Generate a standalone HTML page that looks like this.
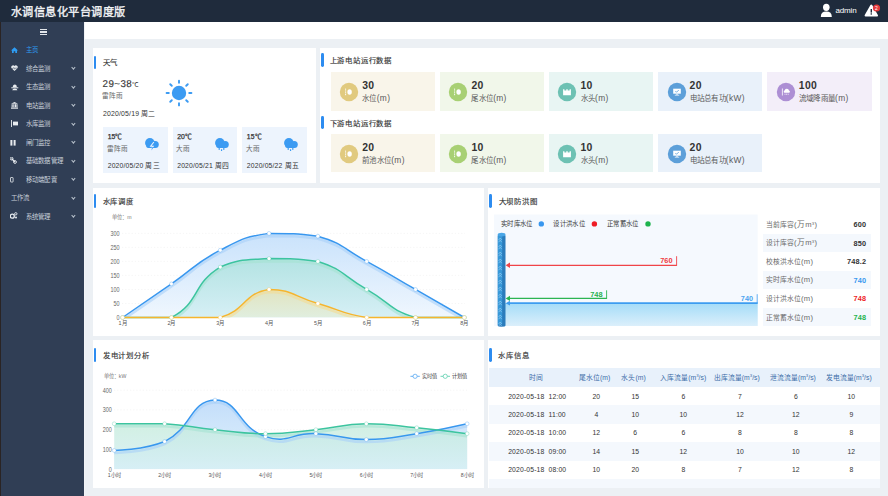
<!DOCTYPE html><html lang="zh-CN"><head><meta charset="utf-8"><style>
*{margin:0;padding:0;box-sizing:border-box}
html,body{width:888px;height:496px;overflow:hidden;background:#ecf0f4;font-family:"Liberation Sans",sans-serif;color:#333}
.a{position:absolute;white-space:nowrap}
.card{position:absolute;background:#fff}
.bar{position:absolute;width:2.8px;background:#2d8cf0;border-radius:1.4px}
.ttl{position:absolute;font-size:7.4px;color:#333;line-height:1;white-space:nowrap;letter-spacing:0.8px;-webkit-text-stroke:0.15px #333}
.mi{position:absolute;font-size:6.4px;letter-spacing:0.3px;color:#c3cbd6;line-height:1;white-space:nowrap}
.chev{position:absolute;width:2.8px;height:2.8px;border-right:0.8px solid #b8c1cc;border-bottom:0.8px solid #b8c1cc;transform:rotate(45deg)}
svg text{font-family:"Liberation Sans",sans-serif}
</style></head><body>
<div class="a" style="left:0;top:0;width:888px;height:21.8px;background:#1f2b3c"></div>
<div class="a" style="left:10.6px;top:5.8px;font-size:11.2px;line-height:13px;color:#f4f5f7;letter-spacing:0.5px;-webkit-text-stroke:0.35px #f4f5f7">水调信息化平台调度版</div>
<svg class="a" style="left:819.5px;top:3px" width="13" height="15" viewBox="0 0 13 15"><ellipse cx="6.3" cy="4.3" rx="3.3" ry="3.6" fill="#fff"/><path d="M0.8,14 Q0.8,8.6 6.3,8.6 Q11.8,8.6 11.8,14 Z" fill="#fff"/></svg>
<div class="a" style="left:835.5px;top:5.6px;font-size:8px;line-height:10px;color:#fff;letter-spacing:-0.15px">admin</div>
<svg class="a" style="left:864px;top:2px" width="22" height="17" viewBox="0 0 22 17"><path d="M7.3,3.5 L13,13.6 L1.6,13.6 Z" fill="#fff" stroke="#fff" stroke-width="2" stroke-linejoin="round"/><rect x="6.6" y="7" width="1.4" height="3.6" fill="#1e2a3b"/><rect x="6.6" y="11.3" width="1.4" height="1.3" fill="#1e2a3b"/><circle cx="12.5" cy="6" r="3.6" fill="#e4393c"/><text x="12.5" y="7.9" font-size="5" fill="#fff" text-anchor="middle">2</text></svg>
<div class="a" style="left:0;top:21.8px;width:84px;height:475px;background:#303e55"></div>
<div class="a" style="left:0;top:21.8px;width:1.2px;height:475px;background:#2a2424"></div>
<div class="a" style="left:83.8px;top:21.8px;width:1.2px;height:475px;background:#f1f3f6"></div>
<div class="a" style="left:39.6px;top:29.0px;width:7.2px;height:1.3px;background:#e2e6eb"></div>
<div class="a" style="left:39.6px;top:31.4px;width:7.2px;height:1.3px;background:#e2e6eb"></div>
<div class="a" style="left:39.6px;top:33.9px;width:7.2px;height:1.3px;background:#e2e6eb"></div>
<div class="mi" style="left:25.5px;top:47.1px;color:#2e9cf3">主页</div>
<svg class="a" style="left:11.0px;top:47.3px" width="8" height="8" viewBox="0 0 8 8"><path d="M3.5,0.3 L7,3.4 L6,3.4 L6,6 L4.3,6 L4.3,4.3 L2.7,4.3 L2.7,6 L1,6 L1,3.4 L0,3.4 Z" fill="#2e9cf3"/></svg>
<div class="mi" style="left:25.5px;top:65.6px;color:#c9d0da">综合监测</div>
<div class="chev" style="left:72.4px;top:66.2px"></div>
<svg class="a" style="left:10.6px;top:65.4px" width="8" height="8" viewBox="0 0 8 8"><path d="M3.5,6 L0.6,3.2 A1.7,1.7 0 0 1 3.5,1 A1.7,1.7 0 0 1 6.4,3.2 Z" fill="#e8ecf0"/><path d="M0.6,3.4 L2.2,3.4 L2.8,2.4 L3.6,4.2 L4.3,3.1 L6.4,3.1" stroke="#303e55" stroke-width="0.5" fill="none"/></svg>
<div class="mi" style="left:25.5px;top:84.1px;color:#c9d0da">生态监测</div>
<div class="chev" style="left:72.4px;top:84.7px"></div>
<svg class="a" style="left:10.5px;top:84.0px" width="8" height="8" viewBox="0 0 8 8"><path d="M1.8,3.2 Q1.8,0.4 3.8,0.4 Q5.8,0.4 5.8,3.2 Z" fill="#e8ecf0"/><rect x="0.3" y="3.3" width="7" height="1" fill="#e8ecf0"/><path d="M1.2,6.2 Q1.5,4.6 3.8,4.6 Q6.1,4.6 6.4,6.2 Z" fill="#e8ecf0"/></svg>
<div class="mi" style="left:25.5px;top:102.6px;color:#c9d0da">电站监测</div>
<div class="chev" style="left:72.4px;top:103.2px"></div>
<svg class="a" style="left:10.6px;top:101.8px" width="8" height="8" viewBox="0 0 8 8"><path d="M3.5,0 L7,1.8 L0,1.8 Z" fill="#e8ecf0"/><rect x="0.6" y="2.2" width="1.1" height="3" fill="#e8ecf0"/><rect x="2.3" y="2.2" width="1.1" height="3" fill="#e8ecf0"/><rect x="3.9" y="2.2" width="1.1" height="3" fill="#e8ecf0"/><rect x="5.4" y="2.2" width="1.1" height="3" fill="#e8ecf0"/><rect x="0" y="5.5" width="7" height="1.2" fill="#e8ecf0"/></svg>
<div class="mi" style="left:25.5px;top:121.1px;color:#c9d0da">水库监测</div>
<div class="chev" style="left:72.4px;top:121.7px"></div>
<svg class="a" style="left:10.5px;top:120.0px" width="8" height="8" viewBox="0 0 8 8"><rect x="0" y="0" width="0.9" height="7" fill="#e8ecf0"/><rect x="2" y="1.6" width="5" height="3.8" fill="#e8ecf0"/></svg>
<div class="mi" style="left:25.5px;top:139.6px;color:#c9d0da">闸门监控</div>
<div class="chev" style="left:72.4px;top:140.2px"></div>
<svg class="a" style="left:10.2px;top:139.8px" width="8" height="8" viewBox="0 0 8 8"><rect x="0.4" y="0" width="2" height="5.6" fill="#e8ecf0"/><rect x="3.6" y="0" width="2" height="5.6" fill="#e8ecf0"/></svg>
<div class="mi" style="left:25.5px;top:158.1px;color:#c9d0da">基础数据管理</div>
<div class="chev" style="left:72.4px;top:158.7px"></div>
<svg class="a" style="left:10.4px;top:156.6px" width="8" height="8" viewBox="0 0 8 8"><path d="M1.5,1.5 L5,5" stroke="#e8ecf0" stroke-width="1.2"/><circle cx="1.6" cy="1.6" r="1.4" fill="none" stroke="#e8ecf0" stroke-width="0.9"/><circle cx="5" cy="5" r="1.4" fill="none" stroke="#e8ecf0" stroke-width="0.9"/></svg>
<div class="mi" style="left:25.5px;top:176.6px;color:#c9d0da">移动端配置</div>
<div class="chev" style="left:72.4px;top:177.2px"></div>
<svg class="a" style="left:10.2px;top:176.8px" width="8" height="8" viewBox="0 0 8 8"><rect x="0.5" y="0.5" width="2.6" height="4.5" rx="0.4" fill="none" stroke="#e8ecf0" stroke-width="0.8"/></svg>
<div class="mi" style="left:10.5px;top:195.1px;color:#c9d0da">工作流</div>
<div class="chev" style="left:72.4px;top:195.7px"></div>
<div class="mi" style="left:25.5px;top:213.6px;color:#c9d0da">系统管理</div>
<div class="chev" style="left:72.4px;top:214.2px"></div>
<svg class="a" style="left:10.4px;top:211.6px" width="8" height="8" viewBox="0 0 8 8"><circle cx="2.3" cy="4.2" r="2" fill="none" stroke="#e8ecf0" stroke-width="1.3"/><circle cx="5.8" cy="1.8" r="1.2" fill="none" stroke="#e8ecf0" stroke-width="0.9"/><circle cx="6" cy="5.6" r="1" fill="#e8ecf0"/></svg>
<div class="a" style="left:85px;top:21.8px;width:803px;height:17.2px;background:#fff"></div>
<div class="card" style="left:93.4px;top:48.0px;width:222.3px;height:134.8px"></div>
<div class="card" style="left:319.8px;top:48.0px;width:560.0px;height:134.8px"></div>
<div class="card" style="left:93.4px;top:187.8px;width:391.1px;height:148.0px"></div>
<div class="card" style="left:488.4px;top:187.8px;width:391.4px;height:148.0px"></div>
<div class="card" style="left:93.4px;top:340.4px;width:391.1px;height:147.8px"></div>
<div class="card" style="left:488.4px;top:340.4px;width:391.4px;height:147.8px"></div>
<div class="bar" style="left:93.6px;top:56.0px;height:12.8px"></div>
<div class="ttl" style="left:102.6px;top:59.1px">天气</div>
<div class="bar" style="left:320.8px;top:53.3px;height:13.8px"></div>
<div class="ttl" style="left:329.6px;top:57.4px">上游电站运行数据</div>
<div class="bar" style="left:320.8px;top:115.9px;height:13.0px"></div>
<div class="ttl" style="left:329.6px;top:120.1px">下游电站运行数据</div>
<div class="bar" style="left:93.6px;top:194.0px;height:14.0px"></div>
<div class="ttl" style="left:102.6px;top:198.1px">水库调度</div>
<div class="bar" style="left:489.0px;top:194.0px;height:14.0px"></div>
<div class="ttl" style="left:498.6px;top:197.8px">大坝防洪图</div>
<div class="bar" style="left:93.6px;top:347.7px;height:14.0px"></div>
<div class="ttl" style="left:102.8px;top:352.3px">发电计划分析</div>
<div class="bar" style="left:489.0px;top:347.7px;height:14.0px"></div>
<div class="ttl" style="left:498.4px;top:351.8px">水库信息</div>
<div class="a" style="left:330.8px;top:72.1px;width:104.2px;height:38.6px;background:#f9f5ea"></div>
<svg class="a" style="left:339.0px;top:81.7px" width="20" height="20" viewBox="-10 -10 20 20"><circle r="9.2" fill="#e1ca7f"/><path d="M-3.4,-3.4 L-3.4,3.4" stroke="#fff" stroke-width="0.9" stroke-dasharray="1.2,0.6"/><ellipse cx="0.6" cy="0" rx="2.2" ry="2.8" fill="#fff"/></svg>
<div class="a" style="left:362.2px;top:79.7px;font-size:10.4px;line-height:11px;font-weight:bold;color:#333;letter-spacing:0.3px">30</div>
<div class="a" style="left:362.2px;top:93.9px;font-size:7.5px;line-height:8px;color:#5a5a5a;letter-spacing:0.25px">水位<span style="letter-spacing:0.35px;font-size:112%">(m)</span></div>
<div class="a" style="left:440.0px;top:72.1px;width:104.2px;height:38.6px;background:#f1f7ea"></div>
<svg class="a" style="left:448.2px;top:81.7px" width="20" height="20" viewBox="-10 -10 20 20"><circle r="9.2" fill="#a8d074"/><path d="M-3.4,-3.4 L-3.4,3.4" stroke="#fff" stroke-width="0.9" stroke-dasharray="1.2,0.6"/><ellipse cx="0.6" cy="0" rx="2.2" ry="2.8" fill="#fff"/></svg>
<div class="a" style="left:471.4px;top:79.7px;font-size:10.4px;line-height:11px;font-weight:bold;color:#333;letter-spacing:0.3px">20</div>
<div class="a" style="left:471.4px;top:93.9px;font-size:7.5px;line-height:8px;color:#5a5a5a;letter-spacing:0.25px">尾水位<span style="letter-spacing:0.35px;font-size:112%">(m)</span></div>
<div class="a" style="left:549.1px;top:72.1px;width:104.2px;height:38.6px;background:#e8f5f3"></div>
<svg class="a" style="left:557.3px;top:81.7px" width="20" height="20" viewBox="-10 -10 20 20"><circle r="9.2" fill="#6dc1b3"/><path d="M-3.9,-2.8 L-2.6,-2.8 L-2.6,-1.4 L-0.7,-1.4 L-0.7,-2.8 L0.7,-2.8 L0.7,-1.4 L2.6,-1.4 L2.6,-2.8 L3.9,-2.8 L3.9,3.3 L-3.9,3.3 Z" fill="#fff"/></svg>
<div class="a" style="left:580.5px;top:79.7px;font-size:10.4px;line-height:11px;font-weight:bold;color:#333;letter-spacing:0.3px">10</div>
<div class="a" style="left:580.5px;top:93.9px;font-size:7.5px;line-height:8px;color:#5a5a5a;letter-spacing:0.25px">水头<span style="letter-spacing:0.35px;font-size:112%">(m)</span></div>
<div class="a" style="left:658.2px;top:72.1px;width:104.2px;height:38.6px;background:#e9f1fa"></div>
<svg class="a" style="left:666.5px;top:81.7px" width="20" height="20" viewBox="-10 -10 20 20"><circle r="9.2" fill="#5c9fd9"/><rect x="-3.8" y="-3.3" width="7.6" height="5" fill="#fff"/><path d="M-1.6,-1 L-0.5,0.3 L1.8,-2" stroke="#5c9fd9" stroke-width="0.8" fill="none"/><rect x="-0.6" y="1.7" width="1.2" height="1.2" fill="#fff"/><rect x="-2.2" y="2.8" width="4.4" height="0.7" fill="#fff"/></svg>
<div class="a" style="left:689.6px;top:79.7px;font-size:10.4px;line-height:11px;font-weight:bold;color:#333;letter-spacing:0.3px">20</div>
<div class="a" style="left:689.6px;top:93.9px;font-size:7.5px;line-height:8px;color:#5a5a5a;letter-spacing:0.25px">电站总有功<span style="letter-spacing:0.35px;font-size:112%">(kW)</span></div>
<div class="a" style="left:767.4px;top:72.1px;width:104.2px;height:38.6px;background:#f3eef9"></div>
<svg class="a" style="left:775.6px;top:81.7px" width="20" height="20" viewBox="-10 -10 20 20"><circle r="9.2" fill="#ad8fd4"/><path d="M-3.6,-3.5 L-3.6,3.5" stroke="#fff" stroke-width="0.8"/><path d="M-1.8,0.8 A1.6,1.6 0 0 1 -1.2,-1.8 A2.2,2.2 0 0 1 3,-1.6 A1.3,1.3 0 0 1 3.2,0.8 Z" fill="#fff"/><path d="M-1,1.6 L-1,3 M0.6,1.6 L0.6,3 M2.2,1.6 L2.2,3" stroke="#fff" stroke-width="0.6"/></svg>
<div class="a" style="left:798.8px;top:79.7px;font-size:10.4px;line-height:11px;font-weight:bold;color:#333;letter-spacing:0.3px">100</div>
<div class="a" style="left:798.8px;top:93.9px;font-size:7.5px;line-height:8px;color:#5a5a5a;letter-spacing:0.25px">流域降雨量<span style="letter-spacing:0.35px;font-size:112%">(m)</span></div>
<div class="a" style="left:330.8px;top:133.9px;width:104.2px;height:38.6px;background:#f9f5ea"></div>
<svg class="a" style="left:339.0px;top:143.5px" width="20" height="20" viewBox="-10 -10 20 20"><circle r="9.2" fill="#e1ca7f"/><path d="M-3.4,-3.4 L-3.4,3.4" stroke="#fff" stroke-width="0.9" stroke-dasharray="1.2,0.6"/><ellipse cx="0.6" cy="0" rx="2.2" ry="2.8" fill="#fff"/></svg>
<div class="a" style="left:362.2px;top:141.5px;font-size:10.4px;line-height:11px;font-weight:bold;color:#333;letter-spacing:0.3px">20</div>
<div class="a" style="left:362.2px;top:155.7px;font-size:7.5px;line-height:8px;color:#5a5a5a;letter-spacing:0.25px">前池水位<span style="letter-spacing:0.35px;font-size:112%">(m)</span></div>
<div class="a" style="left:440.0px;top:133.9px;width:104.2px;height:38.6px;background:#f1f7ea"></div>
<svg class="a" style="left:448.2px;top:143.5px" width="20" height="20" viewBox="-10 -10 20 20"><circle r="9.2" fill="#a8d074"/><path d="M-3.4,-3.4 L-3.4,3.4" stroke="#fff" stroke-width="0.9" stroke-dasharray="1.2,0.6"/><ellipse cx="0.6" cy="0" rx="2.2" ry="2.8" fill="#fff"/></svg>
<div class="a" style="left:471.4px;top:141.5px;font-size:10.4px;line-height:11px;font-weight:bold;color:#333;letter-spacing:0.3px">10</div>
<div class="a" style="left:471.4px;top:155.7px;font-size:7.5px;line-height:8px;color:#5a5a5a;letter-spacing:0.25px">尾水位<span style="letter-spacing:0.35px;font-size:112%">(m)</span></div>
<div class="a" style="left:549.1px;top:133.9px;width:104.2px;height:38.6px;background:#e8f5f3"></div>
<svg class="a" style="left:557.3px;top:143.5px" width="20" height="20" viewBox="-10 -10 20 20"><circle r="9.2" fill="#6dc1b3"/><path d="M-3.9,-2.8 L-2.6,-2.8 L-2.6,-1.4 L-0.7,-1.4 L-0.7,-2.8 L0.7,-2.8 L0.7,-1.4 L2.6,-1.4 L2.6,-2.8 L3.9,-2.8 L3.9,3.3 L-3.9,3.3 Z" fill="#fff"/></svg>
<div class="a" style="left:580.5px;top:141.5px;font-size:10.4px;line-height:11px;font-weight:bold;color:#333;letter-spacing:0.3px">10</div>
<div class="a" style="left:580.5px;top:155.7px;font-size:7.5px;line-height:8px;color:#5a5a5a;letter-spacing:0.25px">水头<span style="letter-spacing:0.35px;font-size:112%">(m)</span></div>
<div class="a" style="left:658.2px;top:133.9px;width:104.2px;height:38.6px;background:#e9f1fa"></div>
<svg class="a" style="left:666.5px;top:143.5px" width="20" height="20" viewBox="-10 -10 20 20"><circle r="9.2" fill="#5c9fd9"/><rect x="-3.8" y="-3.3" width="7.6" height="5" fill="#fff"/><path d="M-1.6,-1 L-0.5,0.3 L1.8,-2" stroke="#5c9fd9" stroke-width="0.8" fill="none"/><rect x="-0.6" y="1.7" width="1.2" height="1.2" fill="#fff"/><rect x="-2.2" y="2.8" width="4.4" height="0.7" fill="#fff"/></svg>
<div class="a" style="left:689.6px;top:141.5px;font-size:10.4px;line-height:11px;font-weight:bold;color:#333;letter-spacing:0.3px">20</div>
<div class="a" style="left:689.6px;top:155.7px;font-size:7.5px;line-height:8px;color:#5a5a5a;letter-spacing:0.25px">电站总有功<span style="letter-spacing:0.35px;font-size:112%">(kW)</span></div>
<div class="a" style="left:102.6px;top:78.9px;font-size:9.8px;line-height:12px;color:#333;letter-spacing:0.4px;-webkit-text-stroke:0.12px #333;text-rendering:geometricPrecision">29~38<span style="font-size:6.6px;-webkit-text-stroke:0;letter-spacing:0">℃</span></div>
<div class="a" style="left:102px;top:91.6px;font-size:6.6px;line-height:8px;color:#666">雷阵雨</div>
<div class="a" style="left:103px;top:110.3px;font-size:6.9px;line-height:8px;color:#333;letter-spacing:0.17px">2020/05/19 周二</div>
<svg class="a" style="left:163.6px;top:77.6px" width="30" height="30" viewBox="-15 -15 30 30"><circle r="7.2" fill="#3c9bf2"/><line x1="10.20" y1="0.00" x2="12.40" y2="0.00" stroke="#3c9bf2" stroke-width="1.9" stroke-linecap="round"/><line x1="7.21" y1="7.21" x2="8.77" y2="8.77" stroke="#3c9bf2" stroke-width="1.9" stroke-linecap="round"/><line x1="0.00" y1="10.20" x2="0.00" y2="12.40" stroke="#3c9bf2" stroke-width="1.9" stroke-linecap="round"/><line x1="-7.21" y1="7.21" x2="-8.77" y2="8.77" stroke="#3c9bf2" stroke-width="1.9" stroke-linecap="round"/><line x1="-10.20" y1="0.00" x2="-12.40" y2="0.00" stroke="#3c9bf2" stroke-width="1.9" stroke-linecap="round"/><line x1="-7.21" y1="-7.21" x2="-8.77" y2="-8.77" stroke="#3c9bf2" stroke-width="1.9" stroke-linecap="round"/><line x1="-0.00" y1="-10.20" x2="-0.00" y2="-12.40" stroke="#3c9bf2" stroke-width="1.9" stroke-linecap="round"/><line x1="7.21" y1="-7.21" x2="8.77" y2="-8.77" stroke="#3c9bf2" stroke-width="1.9" stroke-linecap="round"/></svg>
<div class="a" style="left:103.1px;top:126.8px;width:64.7px;height:46.2px;background:#edf4fd"></div>
<div class="a" style="left:107.7px;top:132.8px;font-size:6.8px;line-height:8px;color:#333;-webkit-text-stroke:0.25px #333;letter-spacing:0.1px">15℃</div>
<div class="a" style="left:106.7px;top:144.6px;font-size:6.6px;line-height:8px;color:#666">雷阵雨</div>
<div class="a" style="left:107.7px;top:161.6px;font-size:6.8px;line-height:8px;color:#333;letter-spacing:0.17px">2020/05/20 周三</div>
<svg class="a" style="left:144.3px;top:136.6px" width="15" height="14" viewBox="0 0 14 13"><circle cx="5.5" cy="5.5" r="4.5" fill="#3c9bf2"/><circle cx="10.5" cy="6.9" r="3.3" fill="#3c9bf2"/><rect x="2.2" y="5.6" width="9.5" height="4.6" rx="1.6" fill="#3c9bf2"/><path d="M9.2,4.6 L6.2,8.6 L8.6,8.6 L6.6,11.6" stroke="#edf4fd" stroke-width="1" fill="none" stroke-linejoin="miter"/><path d="M7.6,9.6 L8.9,9.6 L6.9,12.6 Z" fill="#3c9bf2"/></svg>
<div class="a" style="left:172.6px;top:126.8px;width:64.7px;height:46.2px;background:#edf4fd"></div>
<div class="a" style="left:177.2px;top:132.8px;font-size:6.8px;line-height:8px;color:#333;-webkit-text-stroke:0.25px #333;letter-spacing:0.1px">20℃</div>
<div class="a" style="left:176.2px;top:144.6px;font-size:6.6px;line-height:8px;color:#666">大雨</div>
<div class="a" style="left:177.2px;top:161.6px;font-size:6.8px;line-height:8px;color:#333;letter-spacing:0.17px">2020/05/21 周四</div>
<svg class="a" style="left:213.8px;top:136.6px" width="15" height="14" viewBox="0 0 14 13"><circle cx="5.5" cy="5.5" r="4.5" fill="#3c9bf2"/><circle cx="10.5" cy="6.9" r="3.3" fill="#3c9bf2"/><rect x="2.2" y="5.6" width="9.5" height="4.6" rx="1.6" fill="#3c9bf2"/><rect x="4.3" y="9.8" width="1.1" height="2.2" fill="#3c9bf2"/><rect x="8.6" y="9.8" width="1.1" height="2.2" fill="#3c9bf2"/><rect x="6.5" y="11.4" width="1.1" height="1.7" fill="#3c9bf2"/></svg>
<div class="a" style="left:242.2px;top:126.8px;width:64.7px;height:46.2px;background:#edf4fd"></div>
<div class="a" style="left:246.8px;top:132.8px;font-size:6.8px;line-height:8px;color:#333;-webkit-text-stroke:0.25px #333;letter-spacing:0.1px">15℃</div>
<div class="a" style="left:245.8px;top:144.6px;font-size:6.6px;line-height:8px;color:#666">大雨</div>
<div class="a" style="left:246.8px;top:161.6px;font-size:6.8px;line-height:8px;color:#333;letter-spacing:0.17px">2020/05/22 周五</div>
<svg class="a" style="left:283.4px;top:136.6px" width="15" height="14" viewBox="0 0 14 13"><circle cx="5.5" cy="5.5" r="4.5" fill="#3c9bf2"/><circle cx="10.5" cy="6.9" r="3.3" fill="#3c9bf2"/><rect x="2.2" y="5.6" width="9.5" height="4.6" rx="1.6" fill="#3c9bf2"/><rect x="4.3" y="9.8" width="1.1" height="2.2" fill="#3c9bf2"/><rect x="8.6" y="9.8" width="1.1" height="2.2" fill="#3c9bf2"/><rect x="6.5" y="11.4" width="1.1" height="1.7" fill="#3c9bf2"/></svg>
<svg class="a" style="left:0;top:0" width="888" height="496" viewBox="0 0 888 496">
<defs><linearGradient id="gb" x1="0" y1="0" x2="0" y2="1"><stop offset="0" stop-color="#c3dffb"/><stop offset="1" stop-color="#eef6fe"/></linearGradient><linearGradient id="gg" x1="0" y1="0" x2="0" y2="1"><stop offset="0" stop-color="#ade2de"/><stop offset="1" stop-color="#d2eef4"/></linearGradient><linearGradient id="gy" x1="0" y1="0" x2="0" y2="1"><stop offset="0" stop-color="#e6e3b8"/><stop offset="1" stop-color="#e2eedb"/></linearGradient><linearGradient id="gb2" x1="0" y1="0" x2="0" y2="1"><stop offset="0" stop-color="#b9d8fa"/><stop offset="1" stop-color="#dcf0fa"/></linearGradient><linearGradient id="gg2" x1="0" y1="0" x2="0" y2="1"><stop offset="0" stop-color="#c6ecdc"/><stop offset="1" stop-color="#d4eef4"/></linearGradient><linearGradient id="gw" x1="0" y1="0" x2="0" y2="1"><stop offset="0" stop-color="#a4dcf8"/><stop offset="1" stop-color="#dbeffb"/></linearGradient><clipPath id="c1"><rect x="118" y="220" width="352" height="97.6"/></clipPath><clipPath id="c2"><rect x="110" y="380" width="362" height="89.3"/></clipPath></defs>
<text transform="translate(119.5,319.90) scale(0.8,1)" font-size="6.8" fill="#666" text-anchor="end">0</text>
<text transform="translate(119.5,305.88) scale(0.8,1)" font-size="6.8" fill="#666" text-anchor="end">50</text>
<line x1="122" y1="303.5" x2="465" y2="303.5" stroke="#eeeeee" stroke-width="0.6" stroke-dasharray="1.2,2"/>
<text transform="translate(119.5,291.86) scale(0.8,1)" font-size="6.8" fill="#666" text-anchor="end">100</text>
<line x1="122" y1="289.5" x2="465" y2="289.5" stroke="#eeeeee" stroke-width="0.6" stroke-dasharray="1.2,2"/>
<text transform="translate(119.5,277.84) scale(0.8,1)" font-size="6.8" fill="#666" text-anchor="end">150</text>
<line x1="122" y1="275.4" x2="465" y2="275.4" stroke="#eeeeee" stroke-width="0.6" stroke-dasharray="1.2,2"/>
<text transform="translate(119.5,263.82) scale(0.8,1)" font-size="6.8" fill="#666" text-anchor="end">200</text>
<line x1="122" y1="261.4" x2="465" y2="261.4" stroke="#eeeeee" stroke-width="0.6" stroke-dasharray="1.2,2"/>
<text transform="translate(119.5,249.80) scale(0.8,1)" font-size="6.8" fill="#666" text-anchor="end">250</text>
<line x1="122" y1="247.4" x2="465" y2="247.4" stroke="#eeeeee" stroke-width="0.6" stroke-dasharray="1.2,2"/>
<text transform="translate(119.5,235.78) scale(0.8,1)" font-size="6.8" fill="#666" text-anchor="end">300</text>
<line x1="122" y1="233.4" x2="465" y2="233.4" stroke="#eeeeee" stroke-width="0.6" stroke-dasharray="1.2,2"/>
<text x="122.6" y="325.4" font-size="5.4" fill="#555" text-anchor="middle">1月</text>
<text x="171.4" y="325.4" font-size="5.4" fill="#555" text-anchor="middle">2月</text>
<text x="220.2" y="325.4" font-size="5.4" fill="#555" text-anchor="middle">3月</text>
<text x="269.1" y="325.4" font-size="5.4" fill="#555" text-anchor="middle">4月</text>
<text x="317.9" y="325.4" font-size="5.4" fill="#555" text-anchor="middle">5月</text>
<text x="366.7" y="325.4" font-size="5.4" fill="#555" text-anchor="middle">6月</text>
<text x="415.5" y="325.4" font-size="5.4" fill="#555" text-anchor="middle">7月</text>
<text x="464.3" y="325.4" font-size="5.4" fill="#555" text-anchor="middle">8月</text>
<text x="112.2" y="219.3" font-size="5.2" fill="#777">单位：m</text>
<g clip-path="url(#c1)">
<path d="M122.60,317.50 C122.60,317.50 147.01,300.68 171.42,283.85 C195.83,267.03 194.15,263.69 220.24,250.20 C242.97,238.46 243.99,236.98 269.06,233.38 C292.81,233.38 294.89,233.38 317.88,236.18 C343.71,243.60 342.58,248.26 366.70,261.42 C391.40,274.90 391.11,275.44 415.52,289.46 C439.93,303.48 464.34,317.50 464.34,317.50 L464.34,317.50 L122.60,317.50 Z" fill="url(#gb)" opacity="0.9"/>
<path d="M122.60,317.50 C122.60,317.50 151.40,317.50 171.42,317.50 C200.22,302.61 191.61,284.29 220.24,267.03 C240.43,258.62 244.49,260.03 269.06,258.62 C293.31,258.62 295.19,258.62 317.88,261.42 C344.01,269.67 342.29,275.44 366.70,289.46 C391.11,303.48 389.37,309.99 415.52,317.50 C438.19,317.50 464.34,317.50 464.34,317.50 L464.34,317.50 L122.60,317.50 Z" fill="url(#gg)" opacity="0.85"/>
<path d="M122.60,317.50 C122.60,317.50 147.01,317.50 171.42,317.50 C195.83,317.50 197.57,317.50 220.24,317.50 C246.39,309.99 243.39,293.15 269.06,289.46 C292.21,289.46 293.47,296.47 317.88,303.48 C342.29,310.49 341.81,313.93 366.70,317.50 C390.63,317.50 391.11,317.50 415.52,317.50 C439.93,317.50 464.34,317.50 464.34,317.50 L464.34,317.50 L122.60,317.50 Z" fill="url(#gy)" opacity="0.85"/>
<path d="M122.60,320.00 C122.60,320.00 147.01,303.18 171.42,286.35 C195.83,269.53 194.15,266.19 220.24,252.70 C242.97,240.96 243.99,239.48 269.06,235.88 C292.81,235.88 294.89,235.88 317.88,238.68 C343.71,246.10 342.58,250.76 366.70,263.92 C391.40,277.40 391.11,277.94 415.52,291.96 C439.93,305.98 464.34,320.00 464.34,320.00" fill="none" stroke="#a9d0f8" stroke-width="2.6" opacity="0.6"/>
<path d="M122.60,320.00 C122.60,320.00 151.40,320.00 171.42,320.00 C200.22,305.11 191.61,286.79 220.24,269.53 C240.43,261.12 244.49,262.53 269.06,261.12 C293.31,261.12 295.19,261.12 317.88,263.92 C344.01,272.17 342.29,277.94 366.70,291.96 C391.11,305.98 389.37,312.49 415.52,320.00 C438.19,320.00 464.34,320.00 464.34,320.00" fill="none" stroke="#a5e2d2" stroke-width="2.6" opacity="0.6"/>
<path d="M122.60,320.00 C122.60,320.00 147.01,320.00 171.42,320.00 C195.83,320.00 197.57,320.00 220.24,320.00 C246.39,312.49 243.39,295.65 269.06,291.96 C292.21,291.96 293.47,298.97 317.88,305.98 C342.29,312.99 341.81,316.43 366.70,320.00 C390.63,320.00 391.11,320.00 415.52,320.00 C439.93,320.00 464.34,320.00 464.34,320.00" fill="none" stroke="#f3dc94" stroke-width="2.6" opacity="0.6"/>
</g>
<path d="M122.60,317.50 C122.60,317.50 147.01,300.68 171.42,283.85 C195.83,267.03 194.15,263.69 220.24,250.20 C242.97,238.46 243.99,236.98 269.06,233.38 C292.81,233.38 294.89,233.38 317.88,236.18 C343.71,243.60 342.58,248.26 366.70,261.42 C391.40,274.90 391.11,275.44 415.52,289.46 C439.93,303.48 464.34,317.50 464.34,317.50" fill="none" stroke="#3897ef" stroke-width="1.5"/>
<path d="M122.60,317.50 C122.60,317.50 151.40,317.50 171.42,317.50 C200.22,302.61 191.61,284.29 220.24,267.03 C240.43,258.62 244.49,260.03 269.06,258.62 C293.31,258.62 295.19,258.62 317.88,261.42 C344.01,269.67 342.29,275.44 366.70,289.46 C391.11,303.48 389.37,309.99 415.52,317.50 C438.19,317.50 464.34,317.50 464.34,317.50" fill="none" stroke="#3cc49f" stroke-width="1.5"/>
<path d="M122.60,317.50 C122.60,317.50 147.01,317.50 171.42,317.50 C195.83,317.50 197.57,317.50 220.24,317.50 C246.39,309.99 243.39,293.15 269.06,289.46 C292.21,289.46 293.47,296.47 317.88,303.48 C342.29,310.49 341.81,313.93 366.70,317.50 C390.63,317.50 391.11,317.50 415.52,317.50 C439.93,317.50 464.34,317.50 464.34,317.50" fill="none" stroke="#f6b52e" stroke-width="1.5"/>
<circle cx="122.60" cy="317.50" r="1.90" fill="#fff" stroke="#3897ef" stroke-width="0.5" stroke-opacity="0.6"/>
<circle cx="171.42" cy="283.85" r="1.90" fill="#fff" stroke="#3897ef" stroke-width="0.5" stroke-opacity="0.6"/>
<circle cx="220.24" cy="250.20" r="1.90" fill="#fff" stroke="#3897ef" stroke-width="0.5" stroke-opacity="0.6"/>
<circle cx="269.06" cy="233.38" r="1.90" fill="#fff" stroke="#3897ef" stroke-width="0.5" stroke-opacity="0.6"/>
<circle cx="317.88" cy="236.18" r="1.90" fill="#fff" stroke="#3897ef" stroke-width="0.5" stroke-opacity="0.6"/>
<circle cx="366.70" cy="261.42" r="1.90" fill="#fff" stroke="#3897ef" stroke-width="0.5" stroke-opacity="0.6"/>
<circle cx="415.52" cy="289.46" r="1.90" fill="#fff" stroke="#3897ef" stroke-width="0.5" stroke-opacity="0.6"/>
<circle cx="464.34" cy="317.50" r="1.90" fill="#fff" stroke="#3897ef" stroke-width="0.5" stroke-opacity="0.6"/>
<circle cx="122.60" cy="317.50" r="1.90" fill="#fff" stroke="#3cc49f" stroke-width="0.5" stroke-opacity="0.6"/>
<circle cx="171.42" cy="317.50" r="1.90" fill="#fff" stroke="#3cc49f" stroke-width="0.5" stroke-opacity="0.6"/>
<circle cx="220.24" cy="267.03" r="1.90" fill="#fff" stroke="#3cc49f" stroke-width="0.5" stroke-opacity="0.6"/>
<circle cx="269.06" cy="258.62" r="1.90" fill="#fff" stroke="#3cc49f" stroke-width="0.5" stroke-opacity="0.6"/>
<circle cx="317.88" cy="261.42" r="1.90" fill="#fff" stroke="#3cc49f" stroke-width="0.5" stroke-opacity="0.6"/>
<circle cx="366.70" cy="289.46" r="1.90" fill="#fff" stroke="#3cc49f" stroke-width="0.5" stroke-opacity="0.6"/>
<circle cx="415.52" cy="317.50" r="1.90" fill="#fff" stroke="#3cc49f" stroke-width="0.5" stroke-opacity="0.6"/>
<circle cx="464.34" cy="317.50" r="1.90" fill="#fff" stroke="#3cc49f" stroke-width="0.5" stroke-opacity="0.6"/>
<circle cx="122.60" cy="317.50" r="1.90" fill="#fff" stroke="#f6b52e" stroke-width="0.5" stroke-opacity="0.6"/>
<circle cx="171.42" cy="317.50" r="1.90" fill="#fff" stroke="#f6b52e" stroke-width="0.5" stroke-opacity="0.6"/>
<circle cx="220.24" cy="317.50" r="1.90" fill="#fff" stroke="#f6b52e" stroke-width="0.5" stroke-opacity="0.6"/>
<circle cx="269.06" cy="289.46" r="1.90" fill="#fff" stroke="#f6b52e" stroke-width="0.5" stroke-opacity="0.6"/>
<circle cx="317.88" cy="303.48" r="1.90" fill="#fff" stroke="#f6b52e" stroke-width="0.5" stroke-opacity="0.6"/>
<circle cx="366.70" cy="317.50" r="1.90" fill="#fff" stroke="#f6b52e" stroke-width="0.5" stroke-opacity="0.6"/>
<circle cx="415.52" cy="317.50" r="1.90" fill="#fff" stroke="#f6b52e" stroke-width="0.5" stroke-opacity="0.6"/>
<circle cx="464.34" cy="317.50" r="1.90" fill="#fff" stroke="#f6b52e" stroke-width="0.5" stroke-opacity="0.6"/>
<text transform="translate(111.8,471.60) scale(0.8,1)" font-size="6.8" fill="#666" text-anchor="end">0</text>
<text transform="translate(111.8,451.85) scale(0.8,1)" font-size="6.8" fill="#666" text-anchor="end">100</text>
<line x1="114" y1="449.4" x2="467" y2="449.4" stroke="#eeeeee" stroke-width="0.6" stroke-dasharray="1.2,2"/>
<text transform="translate(111.8,432.10) scale(0.8,1)" font-size="6.8" fill="#666" text-anchor="end">200</text>
<line x1="114" y1="429.7" x2="467" y2="429.7" stroke="#eeeeee" stroke-width="0.6" stroke-dasharray="1.2,2"/>
<text transform="translate(111.8,412.35) scale(0.8,1)" font-size="6.8" fill="#666" text-anchor="end">300</text>
<line x1="114" y1="409.9" x2="467" y2="409.9" stroke="#eeeeee" stroke-width="0.6" stroke-dasharray="1.2,2"/>
<text transform="translate(111.8,392.60) scale(0.8,1)" font-size="6.8" fill="#666" text-anchor="end">400</text>
<line x1="114" y1="390.2" x2="467" y2="390.2" stroke="#eeeeee" stroke-width="0.6" stroke-dasharray="1.2,2"/>
<text x="114.2" y="476.6" font-size="5.2" fill="#555" text-anchor="middle">1小时</text>
<text x="164.6" y="476.6" font-size="5.2" fill="#555" text-anchor="middle">2小时</text>
<text x="215.0" y="476.6" font-size="5.2" fill="#555" text-anchor="middle">3小时</text>
<text x="265.5" y="476.6" font-size="5.2" fill="#555" text-anchor="middle">4小时</text>
<text x="315.9" y="476.6" font-size="5.2" fill="#555" text-anchor="middle">5小时</text>
<text x="366.3" y="476.6" font-size="5.2" fill="#555" text-anchor="middle">6小时</text>
<text x="416.7" y="476.6" font-size="5.2" fill="#555" text-anchor="middle">7小时</text>
<text x="467.1" y="476.6" font-size="5.2" fill="#555" text-anchor="middle">8小时</text>
<text x="103.8" y="378.1" font-size="5.2" fill="#777">单位：kW</text>
<g clip-path="url(#c2)">
<path d="M114.20,450.44 C114.20,450.44 142.46,450.44 164.62,441.55 C192.88,427.44 189.23,401.34 215.04,400.07 C239.65,400.07 237.62,427.34 265.46,436.61 C288.04,444.13 290.73,432.91 315.88,433.65 C341.15,434.39 341.09,439.57 366.30,439.57 C391.51,439.57 391.66,437.58 416.72,433.65 C442.08,429.68 467.14,423.77 467.14,423.77 L467.14,469.20 L114.20,469.20 Z" fill="url(#gb2)" opacity="0.85"/>
<path d="M114.20,423.77 C114.20,423.77 139.50,423.77 164.62,423.77 C189.92,425.26 189.78,427.23 215.04,429.70 C240.20,432.16 240.25,433.65 265.46,433.65 C290.67,433.65 290.72,432.16 315.88,429.70 C341.14,427.23 341.04,424.27 366.30,423.77 C391.46,423.77 391.56,425.26 416.72,427.72 C441.98,430.20 467.14,433.65 467.14,433.65 L467.14,469.20 L114.20,469.20 Z" fill="url(#gg2)" opacity="0.8"/>
<path d="M114.20,452.94 C114.20,452.94 142.46,452.94 164.62,444.05 C192.88,429.94 189.23,403.84 215.04,402.57 C239.65,402.57 237.62,429.84 265.46,439.11 C288.04,446.63 290.73,435.41 315.88,436.15 C341.15,436.89 341.09,442.07 366.30,442.07 C391.51,442.07 391.66,440.08 416.72,436.15 C442.08,432.18 467.14,426.27 467.14,426.27" fill="none" stroke="#a9d0f8" stroke-width="2.6" opacity="0.6"/>
<path d="M114.20,426.27 C114.20,426.27 139.50,426.27 164.62,426.27 C189.92,427.76 189.78,429.73 215.04,432.20 C240.20,434.66 240.25,436.15 265.46,436.15 C290.67,436.15 290.72,434.66 315.88,432.20 C341.14,429.73 341.04,426.77 366.30,426.27 C391.46,426.27 391.56,427.76 416.72,430.22 C441.98,432.70 467.14,436.15 467.14,436.15" fill="none" stroke="#a5e2d2" stroke-width="2.6" opacity="0.6"/>
</g>
<path d="M114.20,450.44 C114.20,450.44 142.46,450.44 164.62,441.55 C192.88,427.44 189.23,401.34 215.04,400.07 C239.65,400.07 237.62,427.34 265.46,436.61 C288.04,444.13 290.73,432.91 315.88,433.65 C341.15,434.39 341.09,439.57 366.30,439.57 C391.51,439.57 391.66,437.58 416.72,433.65 C442.08,429.68 467.14,423.77 467.14,423.77" fill="none" stroke="#3897ef" stroke-width="1.5"/>
<path d="M114.20,423.77 C114.20,423.77 139.50,423.77 164.62,423.77 C189.92,425.26 189.78,427.23 215.04,429.70 C240.20,432.16 240.25,433.65 265.46,433.65 C290.67,433.65 290.72,432.16 315.88,429.70 C341.14,427.23 341.04,424.27 366.30,423.77 C391.46,423.77 391.56,425.26 416.72,427.72 C441.98,430.20 467.14,433.65 467.14,433.65" fill="none" stroke="#3cc49f" stroke-width="1.5"/>
<circle cx="114.20" cy="450.44" r="1.90" fill="#fff" stroke="#3897ef" stroke-width="0.5" stroke-opacity="0.6"/>
<circle cx="164.62" cy="441.55" r="1.90" fill="#fff" stroke="#3897ef" stroke-width="0.5" stroke-opacity="0.6"/>
<circle cx="215.04" cy="400.07" r="1.90" fill="#fff" stroke="#3897ef" stroke-width="0.5" stroke-opacity="0.6"/>
<circle cx="265.46" cy="436.61" r="1.90" fill="#fff" stroke="#3897ef" stroke-width="0.5" stroke-opacity="0.6"/>
<circle cx="315.88" cy="433.65" r="1.90" fill="#fff" stroke="#3897ef" stroke-width="0.5" stroke-opacity="0.6"/>
<circle cx="366.30" cy="439.57" r="1.90" fill="#fff" stroke="#3897ef" stroke-width="0.5" stroke-opacity="0.6"/>
<circle cx="416.72" cy="433.65" r="1.90" fill="#fff" stroke="#3897ef" stroke-width="0.5" stroke-opacity="0.6"/>
<circle cx="467.14" cy="423.77" r="1.90" fill="#fff" stroke="#3897ef" stroke-width="0.5" stroke-opacity="0.6"/>
<circle cx="114.20" cy="423.77" r="1.90" fill="#fff" stroke="#3cc49f" stroke-width="0.5" stroke-opacity="0.6"/>
<circle cx="164.62" cy="423.77" r="1.90" fill="#fff" stroke="#3cc49f" stroke-width="0.5" stroke-opacity="0.6"/>
<circle cx="215.04" cy="429.70" r="1.90" fill="#fff" stroke="#3cc49f" stroke-width="0.5" stroke-opacity="0.6"/>
<circle cx="265.46" cy="433.65" r="1.90" fill="#fff" stroke="#3cc49f" stroke-width="0.5" stroke-opacity="0.6"/>
<circle cx="315.88" cy="429.70" r="1.90" fill="#fff" stroke="#3cc49f" stroke-width="0.5" stroke-opacity="0.6"/>
<circle cx="366.30" cy="423.77" r="1.90" fill="#fff" stroke="#3cc49f" stroke-width="0.5" stroke-opacity="0.6"/>
<circle cx="416.72" cy="427.72" r="1.90" fill="#fff" stroke="#3cc49f" stroke-width="0.5" stroke-opacity="0.6"/>
<circle cx="467.14" cy="433.65" r="1.90" fill="#fff" stroke="#3cc49f" stroke-width="0.5" stroke-opacity="0.6"/>
<line x1="410.4" y1="376.3" x2="419.8" y2="376.3" stroke="#5aa9f2" stroke-width="0.9"/><circle cx="415.1" cy="376.3" r="2.1" fill="#fff" stroke="#5aa9f2" stroke-width="0.8"/>
<text x="421.8" y="378.4" font-size="5.2" fill="#444">实时值</text>
<line x1="440.5" y1="376.3" x2="450" y2="376.3" stroke="#5fd0b0" stroke-width="0.9"/><circle cx="445.25" cy="376.3" r="2.1" fill="#fff" stroke="#5fd0b0" stroke-width="0.8"/>
<text x="452.4" y="378.4" font-size="5.2" fill="#444">计划值</text>
<rect x="494" y="214.5" width="263.7" height="111.5" fill="#f5f9fe"/>
<rect x="505" y="303" width="252.7" height="23" fill="url(#gw)"/>
<line x1="508" y1="303.2" x2="757.7" y2="303.2" stroke="#3d9cf0" stroke-width="1.8"/><path d="M505.6,303.2 L510,300.8 L510,305.6 Z" fill="#3d9cf0"/>
<line x1="757.2" y1="294.2" x2="757.2" y2="303" stroke="#3d9cf0" stroke-width="0.8"/>
<text x="753.3" y="300.9" font-size="7.2" fill="#4aa3f0" text-anchor="end" font-weight="bold" letter-spacing="0.2">740</text>
<line x1="508" y1="265.3" x2="676.8" y2="265.3" stroke="#f04448" stroke-width="1.2"/><line x1="676.6" y1="256.2" x2="676.6" y2="265.9" stroke="#f04448" stroke-width="0.9"/><path d="M505.6,265.3 L510,262.5 L510,268.1 Z" fill="#f04448"/>
<text x="672.6" y="263" font-size="7.4" fill="#f0393d" text-anchor="end" font-weight="bold">760</text>
<line x1="508" y1="298.4" x2="606.8" y2="298.4" stroke="#2cb552" stroke-width="1.2"/><line x1="606.6" y1="290.3" x2="606.6" y2="299" stroke="#2cb552" stroke-width="0.9"/><path d="M505.6,298.4 L510,295.8 L510,301 Z" fill="#2cb552"/>
<text x="602.6" y="296.5" font-size="7.4" fill="#28b14e" text-anchor="end" font-weight="bold">748</text>
<rect x="497.8" y="234.5" width="7.7" height="91.5" rx="1.5" fill="#2b7cbc"/><rect x="497.8" y="234.5" width="4.4" height="91.5" fill="#3798d8"/><ellipse cx="501.65" cy="234.6" rx="3.85" ry="1.9" fill="#4aa6e6"/><ellipse cx="501.65" cy="325.6" rx="3.85" ry="1.2" fill="#2b7cbc"/>
<path d="M498.6,240.0 L500.2,238.0 L501.8,240.0 M498.6,242.2 L500.2,240.2 L501.8,242.2" stroke="#9fd3f5" stroke-width="0.6" fill="none"/>
<path d="M498.6,247.0 L500.2,245.0 L501.8,247.0 M498.6,249.2 L500.2,247.2 L501.8,249.2" stroke="#9fd3f5" stroke-width="0.6" fill="none"/>
<path d="M498.6,254.0 L500.2,252.0 L501.8,254.0 M498.6,256.2 L500.2,254.2 L501.8,256.2" stroke="#9fd3f5" stroke-width="0.6" fill="none"/>
<path d="M498.6,261.0 L500.2,259.0 L501.8,261.0 M498.6,263.2 L500.2,261.2 L501.8,263.2" stroke="#9fd3f5" stroke-width="0.6" fill="none"/>
<path d="M498.6,268.0 L500.2,266.0 L501.8,268.0 M498.6,270.2 L500.2,268.2 L501.8,270.2" stroke="#9fd3f5" stroke-width="0.6" fill="none"/>
<path d="M498.6,275.0 L500.2,273.0 L501.8,275.0 M498.6,277.2 L500.2,275.2 L501.8,277.2" stroke="#9fd3f5" stroke-width="0.6" fill="none"/>
<path d="M498.6,282.0 L500.2,280.0 L501.8,282.0 M498.6,284.2 L500.2,282.2 L501.8,284.2" stroke="#9fd3f5" stroke-width="0.6" fill="none"/>
<path d="M498.6,289.0 L500.2,287.0 L501.8,289.0 M498.6,291.2 L500.2,289.2 L501.8,291.2" stroke="#9fd3f5" stroke-width="0.6" fill="none"/>
<path d="M498.6,296.0 L500.2,294.0 L501.8,296.0 M498.6,298.2 L500.2,296.2 L501.8,298.2" stroke="#9fd3f5" stroke-width="0.6" fill="none"/>
<path d="M498.6,303.0 L500.2,301.0 L501.8,303.0 M498.6,305.2 L500.2,303.2 L501.8,305.2" stroke="#9fd3f5" stroke-width="0.6" fill="none"/>
<path d="M498.6,310.0 L500.2,308.0 L501.8,310.0 M498.6,312.2 L500.2,310.2 L501.8,312.2" stroke="#9fd3f5" stroke-width="0.6" fill="none"/>
<path d="M498.6,317.0 L500.2,315.0 L501.8,317.0 M498.6,319.2 L500.2,317.2 L501.8,319.2" stroke="#9fd3f5" stroke-width="0.6" fill="none"/>
<path d="M498.6,324.0 L500.2,322.0 L501.8,324.0 M498.6,326.2 L500.2,324.2 L501.8,326.2" stroke="#9fd3f5" stroke-width="0.6" fill="none"/>
<text x="501" y="226" font-size="6.4" fill="#3a3a3a" letter-spacing="0.3">实时库水位</text><circle cx="541.3" cy="223.9" r="2.7" fill="#3897ef"/>
<text x="553.4" y="226" font-size="6.4" fill="#3a3a3a" letter-spacing="0.3">设计洪水位</text><circle cx="594.4" cy="223.9" r="2.7" fill="#ee1c25"/>
<text x="607" y="226" font-size="6.4" fill="#3a3a3a" letter-spacing="0.3">正常蓄水位</text><circle cx="648" cy="223.9" r="2.7" fill="#1db34d"/>
</svg>
<div class="a" style="left:766px;top:220.8px;font-size:6.8px;line-height:8px;color:#6a6a6a">当前库容<span style="letter-spacing:0.3px;font-size:112%">(万m<span style="font-size:4.4px;position:relative;top:-2.2px">3</span>)</span></div>
<div class="a" style="left:766px;width:100.4px;text-align:right;top:220.9px;font-size:7.3px;line-height:8px;color:#333;font-weight:bold;letter-spacing:0.25px">600</div>
<div class="a" style="left:762.5px;top:233.6px;width:108.2px;height:18.4px;background:#f4f8fd"></div>
<div class="a" style="left:766px;top:239.4px;font-size:6.8px;line-height:8px;color:#6a6a6a">设计库容<span style="letter-spacing:0.3px;font-size:112%">(万m<span style="font-size:4.4px;position:relative;top:-2.2px">3</span>)</span></div>
<div class="a" style="left:766px;width:100.4px;text-align:right;top:239.5px;font-size:7.3px;line-height:8px;color:#333;font-weight:bold;letter-spacing:0.25px">850</div>
<div class="a" style="left:766px;top:257.9px;font-size:6.8px;line-height:8px;color:#6a6a6a">校核洪水位<span style="letter-spacing:0.3px;font-size:112%">(m)</span></div>
<div class="a" style="left:766px;width:100.4px;text-align:right;top:258.0px;font-size:7.3px;line-height:8px;color:#333;font-weight:bold;letter-spacing:0.25px">748.2</div>
<div class="a" style="left:762.5px;top:270.6px;width:108.2px;height:18.4px;background:#f4f8fd"></div>
<div class="a" style="left:766px;top:276.4px;font-size:6.8px;line-height:8px;color:#6a6a6a">实时库水位<span style="letter-spacing:0.3px;font-size:112%">(m)</span></div>
<div class="a" style="left:766px;width:100.4px;text-align:right;top:276.5px;font-size:7.3px;line-height:8px;color:#3897ef;font-weight:bold;letter-spacing:0.25px">740</div>
<div class="a" style="left:766px;top:295.0px;font-size:6.8px;line-height:8px;color:#6a6a6a">设计洪水位<span style="letter-spacing:0.3px;font-size:112%">(m)</span></div>
<div class="a" style="left:766px;width:100.4px;text-align:right;top:295.1px;font-size:7.3px;line-height:8px;color:#ee1c25;font-weight:bold;letter-spacing:0.25px">748</div>
<div class="a" style="left:762.5px;top:307.8px;width:108.2px;height:18.4px;background:#f4f8fd"></div>
<div class="a" style="left:766px;top:313.6px;font-size:6.8px;line-height:8px;color:#6a6a6a">正常蓄水位<span style="letter-spacing:0.3px;font-size:112%">(m)</span></div>
<div class="a" style="left:766px;width:100.4px;text-align:right;top:313.6px;font-size:7.3px;line-height:8px;color:#1db34d;font-weight:bold;letter-spacing:0.25px">748</div>
<div class="a" style="left:488.9px;top:368.1px;width:391px;height:18.8px;background:#e8f1fb"></div>
<div class="a" style="left:495.9px;width:80px;text-align:center;top:373.6px;font-size:6.8px;line-height:8px;color:#3d6da8">时间</div>
<div class="a" style="left:554.6px;width:80px;text-align:center;top:373.6px;font-size:6.8px;line-height:8px;color:#3d6da8">尾水位(m)</div>
<div class="a" style="left:593.6px;width:80px;text-align:center;top:373.6px;font-size:6.8px;line-height:8px;color:#3d6da8">水头(m)</div>
<div class="a" style="left:643.2px;width:80px;text-align:center;top:373.6px;font-size:6.8px;line-height:8px;color:#3d6da8">入库流量(m<span style="font-size:4.4px;position:relative;top:-2.2px">3</span>/s)</div>
<div class="a" style="left:696.8px;width:80px;text-align:center;top:373.6px;font-size:6.8px;line-height:8px;color:#3d6da8">出库流量(m<span style="font-size:4.4px;position:relative;top:-2.2px">3</span>/s)</div>
<div class="a" style="left:752.9px;width:80px;text-align:center;top:373.6px;font-size:6.8px;line-height:8px;color:#3d6da8">泄流流量(m<span style="font-size:4.4px;position:relative;top:-2.2px">3</span>/s)</div>
<div class="a" style="left:808.7px;width:80px;text-align:center;top:373.6px;font-size:6.8px;line-height:8px;color:#3d6da8">发电流量(m<span style="font-size:4.4px;position:relative;top:-2.2px">3</span>/s)</div>
<div class="a" style="left:508.2px;top:392.6px;font-size:6.8px;line-height:8px;color:#333;letter-spacing:0.15px">2020-05-18&nbsp;&nbsp;12:00</div>
<div class="a" style="left:576.3px;width:40px;text-align:center;top:392.6px;font-size:6.8px;line-height:8px;color:#333">20</div>
<div class="a" style="left:615.2px;width:40px;text-align:center;top:392.6px;font-size:6.8px;line-height:8px;color:#333">15</div>
<div class="a" style="left:663.3px;width:40px;text-align:center;top:392.6px;font-size:6.8px;line-height:8px;color:#333">6</div>
<div class="a" style="left:720.0px;width:40px;text-align:center;top:392.6px;font-size:6.8px;line-height:8px;color:#333">7</div>
<div class="a" style="left:775.8px;width:40px;text-align:center;top:392.6px;font-size:6.8px;line-height:8px;color:#333">6</div>
<div class="a" style="left:831.3px;width:40px;text-align:center;top:392.6px;font-size:6.8px;line-height:8px;color:#333">10</div>
<div class="a" style="left:488.9px;top:405.3px;width:391px;height:18.5px;background:#f4f8fd"></div>
<div class="a" style="left:508.2px;top:411.0px;font-size:6.8px;line-height:8px;color:#333;letter-spacing:0.15px">2020-05-18&nbsp;&nbsp;11:00</div>
<div class="a" style="left:576.3px;width:40px;text-align:center;top:411.0px;font-size:6.8px;line-height:8px;color:#333">4</div>
<div class="a" style="left:615.2px;width:40px;text-align:center;top:411.0px;font-size:6.8px;line-height:8px;color:#333">10</div>
<div class="a" style="left:663.3px;width:40px;text-align:center;top:411.0px;font-size:6.8px;line-height:8px;color:#333">10</div>
<div class="a" style="left:720.0px;width:40px;text-align:center;top:411.0px;font-size:6.8px;line-height:8px;color:#333">12</div>
<div class="a" style="left:775.8px;width:40px;text-align:center;top:411.0px;font-size:6.8px;line-height:8px;color:#333">12</div>
<div class="a" style="left:831.3px;width:40px;text-align:center;top:411.0px;font-size:6.8px;line-height:8px;color:#333">9</div>
<div class="a" style="left:508.2px;top:429.4px;font-size:6.8px;line-height:8px;color:#333;letter-spacing:0.15px">2020-05-18&nbsp;&nbsp;10:00</div>
<div class="a" style="left:576.3px;width:40px;text-align:center;top:429.4px;font-size:6.8px;line-height:8px;color:#333">12</div>
<div class="a" style="left:615.2px;width:40px;text-align:center;top:429.4px;font-size:6.8px;line-height:8px;color:#333">6</div>
<div class="a" style="left:663.3px;width:40px;text-align:center;top:429.4px;font-size:6.8px;line-height:8px;color:#333">6</div>
<div class="a" style="left:720.0px;width:40px;text-align:center;top:429.4px;font-size:6.8px;line-height:8px;color:#333">8</div>
<div class="a" style="left:775.8px;width:40px;text-align:center;top:429.4px;font-size:6.8px;line-height:8px;color:#333">8</div>
<div class="a" style="left:831.3px;width:40px;text-align:center;top:429.4px;font-size:6.8px;line-height:8px;color:#333">8</div>
<div class="a" style="left:488.9px;top:442.1px;width:391px;height:18.5px;background:#f4f8fd"></div>
<div class="a" style="left:508.2px;top:447.8px;font-size:6.8px;line-height:8px;color:#333;letter-spacing:0.15px">2020-05-18&nbsp;&nbsp;09:00</div>
<div class="a" style="left:576.3px;width:40px;text-align:center;top:447.8px;font-size:6.8px;line-height:8px;color:#333">14</div>
<div class="a" style="left:615.2px;width:40px;text-align:center;top:447.8px;font-size:6.8px;line-height:8px;color:#333">15</div>
<div class="a" style="left:663.3px;width:40px;text-align:center;top:447.8px;font-size:6.8px;line-height:8px;color:#333">12</div>
<div class="a" style="left:720.0px;width:40px;text-align:center;top:447.8px;font-size:6.8px;line-height:8px;color:#333">10</div>
<div class="a" style="left:775.8px;width:40px;text-align:center;top:447.8px;font-size:6.8px;line-height:8px;color:#333">10</div>
<div class="a" style="left:831.3px;width:40px;text-align:center;top:447.8px;font-size:6.8px;line-height:8px;color:#333">12</div>
<div class="a" style="left:508.2px;top:466.2px;font-size:6.8px;line-height:8px;color:#333;letter-spacing:0.15px">2020-05-18&nbsp;&nbsp;08:00</div>
<div class="a" style="left:576.3px;width:40px;text-align:center;top:466.2px;font-size:6.8px;line-height:8px;color:#333">10</div>
<div class="a" style="left:615.2px;width:40px;text-align:center;top:466.2px;font-size:6.8px;line-height:8px;color:#333">20</div>
<div class="a" style="left:663.3px;width:40px;text-align:center;top:466.2px;font-size:6.8px;line-height:8px;color:#333">8</div>
<div class="a" style="left:720.0px;width:40px;text-align:center;top:466.2px;font-size:6.8px;line-height:8px;color:#333">7</div>
<div class="a" style="left:775.8px;width:40px;text-align:center;top:466.2px;font-size:6.8px;line-height:8px;color:#333">12</div>
<div class="a" style="left:831.3px;width:40px;text-align:center;top:466.2px;font-size:6.8px;line-height:8px;color:#333">8</div>
<div class="a" style="left:488.9px;top:478.9px;width:391px;height:9.3px;background:#f4f8fd"></div>
</body></html>
